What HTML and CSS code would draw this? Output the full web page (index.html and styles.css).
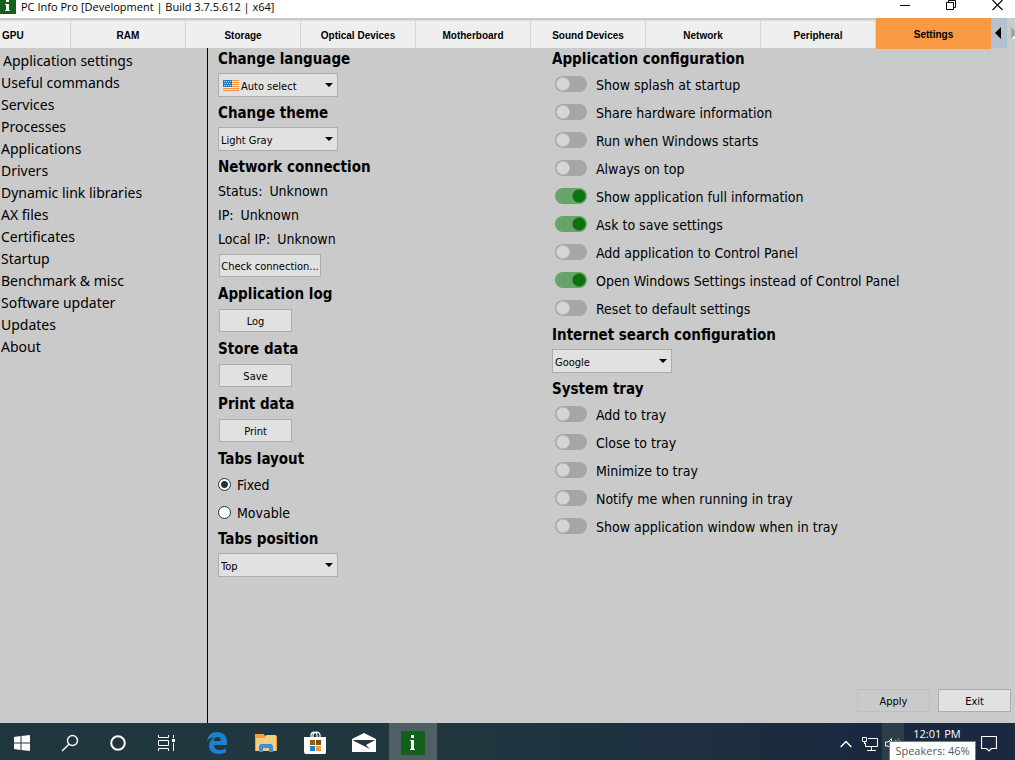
FILE: index.html
```html
<!DOCTYPE html>
<html lang="en">
<head>
    <meta charset="UTF-8">
    <meta name="viewport" content="width=device-width, initial-scale=1.0">
    <title>PC Info Pro</title>
    <link rel="stylesheet" href="styles.css">
</head>
<body>
    <header class="titlebar">
        <svg class="app-icon" width="16" height="18" viewBox="0 0 16 18">
            <path fill="#11611a" d="M0 0h16v14H0z"/>
            <path fill="#fff" d="M6 0h3v2H6zM5 4h4v6h1v1H5v-1h1V5H5z"/>
        </svg>
        <h1 class="window-title">PC Info Pro [Development | Build 3.7.5.612 | x64]</h1>
        <div class="window-buttons">
            <button type="button" aria-label="Minimize">
                <svg width="10" height="12" viewBox="0 0 10 12"><path d="M0 5.500h10" stroke="#000"/></svg>
            </button>
            <button type="button" aria-label="Restore">
                <svg width="11" height="12" viewBox="0 0 11 12"><path d="M.5 2.500h7v7h-7zM2.500 2V.5h7v7H8" fill="none" stroke="#000"/></svg>
            </button>
            <button type="button" aria-label="Close">
                <svg width="11" height="12" viewBox="0 0 11 12"><path d="M.5 0l10 10M10.500 0l-10 10" stroke="#000" stroke-width="1.100"/></svg>
            </button>
        </div>
    </header>

    <nav class="tabs">
        <button type="button" class="tab tab-cut">GPU</button>
        <button type="button" class="tab">RAM</button>
        <button type="button" class="tab">Storage</button>
        <button type="button" class="tab">Optical Devices</button>
        <button type="button" class="tab">Motherboard</button>
        <button type="button" class="tab">Sound Devices</button>
        <button type="button" class="tab">Network</button>
        <button type="button" class="tab">Peripheral</button>
        <button type="button" class="tab tab-active">Settings</button>
        <button type="button" class="tab-scroll tab-scroll-left" aria-label="Scroll left">
            <svg width="6" height="12" viewBox="0 0 6 12"><path d="M6 0v12L0 6z"/></svg>
        </button>
        <button type="button" class="tab-scroll tab-scroll-right" aria-label="Scroll right" disabled>
            <svg width="4" height="12" viewBox="0 0 4 12"><path d="M1 12l3-3v3z" fill="#fff"/><path d="M0 0l4 4v4l-4 3z" fill="#9fa79f"/></svg>
        </button>
    </nav>

    <div class="workspace">
        <ul class="sidebar">
            <li class="selected"><a href="#settings">Application settings</a></li>
            <li><a href="#commands">Useful commands</a></li>
            <li><a href="#services">Services</a></li>
            <li><a href="#processes">Processes</a></li>
            <li><a href="#applications">Applications</a></li>
            <li><a href="#drivers">Drivers</a></li>
            <li><a href="#dll">Dynamic link libraries</a></li>
            <li><a href="#ax">AX files</a></li>
            <li><a href="#certificates">Certificates</a></li>
            <li><a href="#startup">Startup</a></li>
            <li><a href="#benchmark">Benchmark &amp; misc</a></li>
            <li><a href="#software">Software updater</a></li>
            <li><a href="#updates">Updates</a></li>
            <li><a href="#about">About</a></li>
        </ul>

        <main class="settings" id="settings">
            <div class="columns">
                <div class="column">
                    <section class="group">
                        <h2><label for="language">Change language</label></h2>
                        <div class="combo combo-flag">
                            <svg class="flag" width="16" height="11" viewBox="0 0 16 11">
                                <path fill="#fbe6cf" d="M0 0h16v11H0z"/>
                                <path stroke="#ee9240" d="M0 .5h16M0 2.500h16M0 4.500h16M0 6.500h16M0 8.500h16M0 10.500h16"/>
                                <path fill="#2478c4" d="M0 0h9v7H0z"/>
                                <path stroke="#c8e0f4" stroke-dasharray="1 1" d="M1 1.500h7M2 3.500h6M1 5.500h7"/>
                            </svg>
                            <select id="language"><option>Auto select</option></select>
                        </div>
                    </section>
                    <section class="group">
                        <h2><label for="theme">Change theme</label></h2>
                        <div class="combo">
                            <select id="theme"><option>Light Gray</option></select>
                        </div>
                    </section>
                    <section class="group">
                        <h2>Network connection</h2>
                        <div class="status">
                            <p><span>Status:</span><span>Unknown</span></p>
                            <p><span>IP:</span><span>Unknown</span></p>
                            <p><span>Local IP:</span><span>Unknown</span></p>
                        </div>
                        <button type="button" class="button button-wide">Check connection...</button>
                    </section>
                    <section class="group">
                        <h2>Application log</h2>
                        <button type="button" class="button">Log</button>
                    </section>
                    <section class="group">
                        <h2>Store data</h2>
                        <button type="button" class="button">Save</button>
                    </section>
                    <section class="group">
                        <h2>Print data</h2>
                        <button type="button" class="button">Print</button>
                    </section>
                    <section class="group group-rows">
                        <h2>Tabs layout</h2>
                        <label class="radio"><input type="radio" name="layout" checked><span>Fixed</span></label>
                        <label class="radio"><input type="radio" name="layout"><span>Movable</span></label>
                    </section>
                    <section class="group">
                        <h2><label for="position">Tabs position</label></h2>
                        <div class="combo">
                            <select id="position"><option>Top</option></select>
                        </div>
                    </section>
                </div>

                <div class="column">
                    <section class="group group-rows">
                        <h2>Application configuration</h2>
                        <label class="switch"><input type="checkbox"><span>Show splash at startup</span></label>
                        <label class="switch"><input type="checkbox"><span>Share hardware information</span></label>
                        <label class="switch"><input type="checkbox"><span>Run when Windows starts</span></label>
                        <label class="switch"><input type="checkbox"><span>Always on top</span></label>
                        <label class="switch"><input type="checkbox" checked><span>Show application full information</span></label>
                        <label class="switch"><input type="checkbox" checked><span>Ask to save settings</span></label>
                        <label class="switch"><input type="checkbox"><span>Add application to Control Panel</span></label>
                        <label class="switch"><input type="checkbox" checked><span>Open Windows Settings instead of Control Panel</span></label>
                        <label class="switch"><input type="checkbox"><span>Reset to default settings</span></label>
                    </section>
                    <section class="group">
                        <h2><label for="engine">Internet search configuration</label></h2>
                        <div class="combo">
                            <select id="engine"><option>Google</option></select>
                        </div>
                    </section>
                    <section class="group group-rows">
                        <h2>System tray</h2>
                        <label class="switch"><input type="checkbox"><span>Add to tray</span></label>
                        <label class="switch"><input type="checkbox"><span>Close to tray</span></label>
                        <label class="switch"><input type="checkbox"><span>Minimize to tray</span></label>
                        <label class="switch"><input type="checkbox"><span>Notify me when running in tray</span></label>
                        <label class="switch"><input type="checkbox"><span>Show application window when in tray</span></label>
                    </section>
                </div>
            </div>

            <div class="actions">
                <button type="button" class="button" disabled>Apply</button>
                <button type="button" class="button">Exit</button>
            </div>
        </main>
    </div>

    <footer class="taskbar">
        <div class="launchers">
            <button type="button" class="start" aria-label="Start">
                <svg width="16" height="16" viewBox="0 0 16 16"><path fill="#fff" d="M0 2l6.500-1v6.500H0zM7.500 1L16 0v7.500H7.500zM0 8.500h6.500V15L0 14zM7.500 8.500H16V16l-8.500-1z"/></svg>
            </button>
            <button type="button" aria-label="Search">
                <svg width="18" height="18" viewBox="0 0 18 18" fill="none" stroke="#fff" stroke-width="1.400"><circle cx="11.500" cy="6.500" r="5"/><path d="M8 10.200L1 17"/></svg>
            </button>
            <button type="button" aria-label="Cortana">
                <svg width="16" height="16" viewBox="0 0 16 16"><circle cx="8" cy="8" r="6.800" fill="none" stroke="#fff" stroke-width="2"/></svg>
            </button>
            <button type="button" aria-label="Task view">
                <svg width="17" height="16" viewBox="0 0 17 16"><path fill="none" stroke="#fff" d="M.5 0v2.500h10V0M.5 5.500h10v5H.5zM.5 16v-2.500h10V16M15.500 0v3M15.500 8v8"/><path fill="#fff" d="M14 4h3v3h-3z"/></svg>
            </button>
        </div>
        <div class="pinned">
            <button type="button" aria-label="Edge">
                <svg width="20" height="22" viewBox="0 0 20 22"><path fill="#1f7fd1" d="M0 9C1 3 5 0 10 0c6 0 10 4 10 10v3H7c0 3 2 5 6 5 2 0 4-.6 6-1.700v4C17 21.400 15 22 12 22 6 22 2 18.500 2 13.500 2 10 4 7 7.500 5.500 4 5.500 1.500 7 0 9zM7 9h7c0-2-1-4-3.500-4S7 7 7 9z"/></svg>
            </button>
            <button type="button" aria-label="File Explorer">
                <svg width="22" height="18" viewBox="0 0 22 18"><path fill="#f59c3c" d="M0 0h9l1 2h12v15H0z"/><path fill="#efce83" d="M1 4h9l1-3h10v16H1z"/><path fill="#3f8fd5" d="M4 18v-6l1.500-2h11l1.500 2v6h-4v-4H8v4z"/><path fill="#efce83" d="M8 14h6v3H8z"/></svg>
            </button>
            <button type="button" aria-label="Store">
                <svg width="24" height="24" viewBox="0 0 24 24"><path fill="none" stroke="#fff" stroke-width="1.200" d="M8 7V4.500c0-4.500 6-4.500 6 0V7M10 7V4.500C10 0 17 0 17 4.500V7"/><path fill="#fff" d="M1 6h22v16l-1 1H2l-1-2z"/><path fill="#a35b12" d="M7 9h5v5H7z"/><path fill="#8a4c08" d="M13 9h5v5h-5z"/><path fill="#1f7fd1" d="M7 15h5v5H7z"/><path fill="#f79a3e" d="M13 15h5v5h-5z"/></svg>
            </button>
            <button type="button" aria-label="Mail">
                <svg width="24" height="20" viewBox="0 0 24 20"><path fill="#fff" d="M0 6l12-6 12 6v13H0z"/><path fill="#213640" d="M1 7h22l-9 5 4 4L2 8z"/></svg>
            </button>
            <button type="button" class="running" aria-label="PC Info Pro">
                <svg width="24" height="24" viewBox="0 0 24 24"><path fill="#11611a" d="M0 0h24v24H0z"/><path fill="#fff" d="M10 4h3v3h-3zM9 9h4v9h1v1H9v-1h1v-8H9z"/></svg>
            </button>
        </div>
        <div class="tray">
            <button type="button" class="tray-icon" aria-label="Show hidden icons">
                <svg width="12" height="8" viewBox="0 0 12 8"><path d="M.7 7L6 1.500 11.300 7" fill="none" stroke="#fff" stroke-width="1.400"/></svg>
            </button>
            <button type="button" class="tray-icon" aria-label="Network">
                <svg width="16" height="14" viewBox="0 0 16 14"><path d="M6 1.500h9.500v8H3.500V6M9.500 10v3M5 13.500h9M.5.5h4v4h-4zM2.500 4.500V7" fill="none" stroke="#fff"/></svg>
            </button>
            <button type="button" class="tray-icon tray-hover" aria-label="Speakers">
                <svg width="16" height="14" viewBox="0 0 16 14"><path d="M.5 5h2.500L6.500 1.500v11L3 9H.5zM8.500 5q2 2 0 4M10.500 3q4 4 0 8" fill="none" stroke="#fff"/><path d="M12.500 1q6 6 0 12" fill="none" stroke="#80909a"/></svg>
            </button>
            <time class="clock">12:01 PM</time>
            <button type="button" class="notifications" aria-label="Notifications">
                <svg width="16" height="16" viewBox="0 0 16 16"><path d="M.5.5h15v12h-5L8 15l-2.500-2.500h-5z" fill="none" stroke="#fff" stroke-width="1.200"/></svg>
            </button>
            <div class="tooltip" role="tooltip">Speakers: 46%</div>
        </div>
    </footer>
</body>
</html>
```
FILE: styles.css
```css
* {
    box-sizing: border-box;
}

body {
    display: flex;
    flex-direction: column;
    min-height: 100vh;
    margin: 0;
    background-color: #cacaca;
    color: #000;
    font-family: "DejaVu Sans Condensed", "Noto Sans", sans-serif;
    font-size: 14px;
}

button {
    padding: 0;
    border: none;
    background: none;
    color: inherit;
    font-family: inherit;
}

svg {
    display: block;
}

h1, h2, p, ul {
    margin: 0;
    padding: 0;
}

/* Title bar */
.titlebar {
    display: flex;
    height: 18px;
    overflow: hidden;
    background-color: #fff;
}

.window-title {
    flex: 1;
    margin-left: 5px;
    font-family: "Open Sans", sans-serif;
    font-size: 11px;
    font-weight: normal;
    line-height: 14px;
}

.window-buttons {
    display: flex;
    margin-right: -5px;
}

.window-buttons button {
    display: flex;
    justify-content: center;
    width: 46px;
    height: 12px;
}

/* Tabs */
.tabs {
    display: grid;
    grid-template-columns: 71px repeat(8, 1fr) 16px 8px;
    height: 30px;
}

.tab {
    height: 28px;
    padding-top: 2px;
    margin-top: 2px;
    border-top: 1px solid #dcdcdc;
    border-right: 1px solid #d5d5d5;
    background-color: #efefef;
    font-family: "Liberation Sans", Arial, sans-serif;
    font-size: 10px;
    font-weight: bold;
}

.tab-cut {
    padding-left: 2px;
    text-align: left;
}

.tab-active {
    height: 31px;
    margin-top: 0;
    border: none;
    background-color: #f99943;
}

.tab-scroll {
    display: flex;
    align-items: center;
    justify-content: flex-end;
    height: 30px;
}

.tab-scroll-left {
    padding-right: 5px;
    border: 1px solid #a3c4d0;
    background-color: #b4c2cf;
}

/* Sidebar */
.workspace {
    display: flex;
    flex: 1;
}

.sidebar {
    width: 208px;
    padding: 2px 1px;
    border-right: 1px solid #000;
    font-family: "Noto Sans", sans-serif;
    font-size: 14px;
    line-height: 22px;
    list-style: none;
}

.sidebar a {
    color: inherit;
    text-decoration: none;
}

.sidebar .selected {
    padding-left: 2px;
}

/* Settings page */
.settings {
    display: flex;
    flex: 1;
    flex-direction: column;
    justify-content: space-between;
    padding: 0 4px 11px 10px;
}

.columns {
    display: grid;
    grid-template-columns: 334px 1fr;
}

.group {
    padding-bottom: 6px;
}

.group-rows {
    padding-bottom: 2px;
}

.group h2 {
    font-size: 15px;
    line-height: 22px;
}

.group p {
    display: flex;
    gap: 7px;
    line-height: 24px;
}

.status {
    padding-top: 1px;
}

.combo {
    position: relative;
    width: 120px;
    margin: 3px 0 -1px;
}

.combo::after {
    content: "";
    position: absolute;
    top: 10px;
    right: 5px;
    border: 4px solid transparent;
    border-top-color: #000;
    border-bottom: none;
    pointer-events: none;
}

.combo select {
    display: block;
    width: 100%;
    height: 24px;
    padding: 2px 2px 0;
    border: 1px solid #adadad;
    border-radius: 0;
    background-color: #e1e1e1;
    color: #000;
    font-family: inherit;
    font-size: 11px;
    appearance: none;
}

.combo-flag select {
    padding-left: 22px;
}

.flag {
    position: absolute;
    top: 7px;
    left: 5px;
}

.button {
    display: block;
    width: 73px;
    height: 23px;
    padding-top: 2px;
    margin: 4px 0 0 1px;
    border: 1px solid #adadad;
    background-color: #e1e1e1;
    font-size: 11px;
}

.button-wide {
    width: 102px;
    margin-top: 3px;
}

.button:disabled {
    border-color: #bfbfbf;
    background-color: #c8cbca;
    color: #000;
}

.radio,
.switch {
    display: flex;
    align-items: center;
    height: 28px;
}

.radio span,
.switch span {
    padding-top: 2px;
}

.radio {
    gap: 6px;
}

.radio input {
    width: 13px;
    height: 13px;
    margin: 0;
    border: 1px solid #22343b;
    border-radius: 50%;
    background-color: #fff;
    appearance: none;
}

.radio input:checked {
    background-image: radial-gradient(circle, #22343b 3px, #fff 4px);
}

.switch {
    gap: 9px;
    padding-left: 3px;
}

.switch input {
    width: 32px;
    height: 16px;
    margin: 0;
    border-radius: 8px;
    background-color: #a6a6a6;
    background-image: radial-gradient(circle at 8px 8px, #d5d5d5 6px, transparent 7px);
    appearance: none;
}

.switch input:checked {
    background-color: #68a36a;
    background-image: radial-gradient(circle at 24px 8px, #0b730f 6px, transparent 7px);
}

.actions {
    display: flex;
    justify-content: flex-end;
    gap: 7px;
}

/* Taskbar */
.taskbar {
    display: flex;
    height: 37px;
    background: linear-gradient(90deg, #21373f 45%, #1a2940 85%);
    color: #fff;
}

.launchers,
.pinned,
.tray {
    display: flex;
}

.launchers button,
.pinned button {
    display: flex;
    align-items: center;
    justify-content: center;
    width: 48px;
    padding-top: 2px;
}

.launchers .start {
    width: 46px;
    padding-right: 2px;
}

.pinned {
    gap: 1px;
    margin-left: 3px;
}

.pinned .running {
    background-color: #505f66;
}

.tray {
    position: relative;
    margin-left: auto;
}

.tray-icon {
    display: flex;
    align-items: center;
    justify-content: center;
    width: 24px;
    padding-top: 4px;
}

.tray-hover {
    width: 22px;
    background-color: #2b3f4b;
}

.clock {
    width: 66px;
    padding-top: 3px;
    font-family: "Open Sans", sans-serif;
    font-size: 11px;
    line-height: 16px;
    text-align: center;
}

.notifications {
    display: flex;
    align-items: center;
    justify-content: center;
    width: 45px;
    padding: 4px 8px 0 0;
}

.tooltip {
    position: absolute;
    top: 18px;
    right: 39px;
    width: 87px;
    height: 20px;
    border: 1px solid #6c8378;
    background-color: #fff;
    color: #4f5d5d;
    font-family: "Open Sans", sans-serif;
    font-size: 11px;
    line-height: 18px;
    text-align: center;
}
```
